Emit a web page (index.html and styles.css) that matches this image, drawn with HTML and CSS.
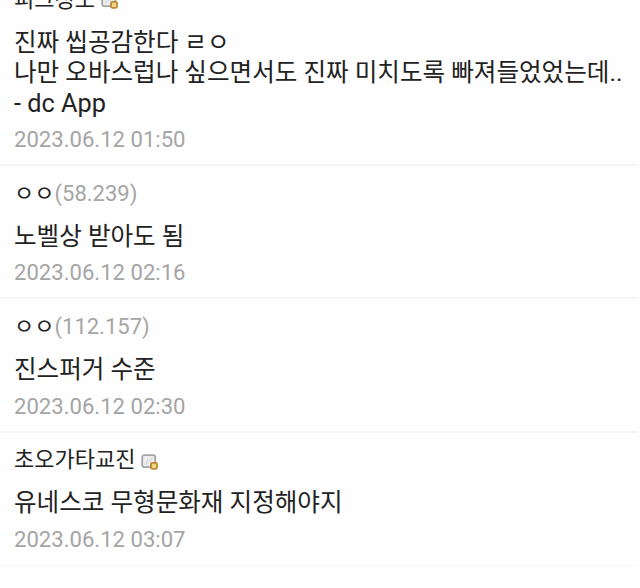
FILE: index.html
```html
<!DOCTYPE html>
<html lang="ko">
<head>
    <meta charset="UTF-8">
    <meta name="viewport" content="width=device-width, initial-scale=1.0">
    <title>댓글</title>
    <link rel="stylesheet" href="styles.css">
</head>
<body>
    <ul class="comments">
        <li class="comment first">
            <div class="writer">피그정모
                <svg class="badge" viewBox="0 0 17 16"><rect x="1.2" y="1.2" width="13" height="12" rx="2" fill="#eee" stroke="#a5a5a5" stroke-width="1.8"/><path d="M5 10l2-5M9 8l2-4" stroke="#d0d0d0" fill="none"/><rect x="10" y="8.8" width="6" height="6" rx="1.2" fill="#f3d488" stroke="#b98a35" stroke-width="1.8"/></svg>
            </div>
            <p class="text">진짜 씹공감한다 ㄹㅇ<br>나만 오바스럽나 싶으면서도 진짜 미치도록 빠져들었었는데..<br><span class="app">- dc App</span></p>
            <div class="date">2023.06.12 01:50</div>
        </li>
        <li class="comment">
            <div class="writer">ㅇㅇ<span class="ip">(58.239)</span></div>
            <p class="text">노벨상 받아도 됨</p>
            <div class="date">2023.06.12 02:16</div>
        </li>
        <li class="comment">
            <div class="writer">ㅇㅇ<span class="ip">(112.157)</span></div>
            <p class="text">진스퍼거 수준</p>
            <div class="date">2023.06.12 02:30</div>
        </li>
        <li class="comment last">
            <div class="writer">초오가타교진
                <svg class="badge" viewBox="0 0 17 16"><rect x="1.2" y="1.2" width="13" height="12" rx="2" fill="#eee" stroke="#a5a5a5" stroke-width="1.8"/><path d="M5 10l2-5M9 8l2-4" stroke="#d0d0d0" fill="none"/><rect x="10" y="8.8" width="6" height="6" rx="1.2" fill="#f3d488" stroke="#b98a35" stroke-width="1.8"/></svg>
            </div>
            <p class="text">유네스코 무형문화재 지정해야지</p>
            <div class="date">2023.06.12 03:07</div>
        </li>
    </ul>
</body>
</html>
```
FILE: styles.css
```css
* {
    box-sizing: border-box;
}
body {
    margin: 0;
    background: #fefefe;
    color: #222;
    font-family: Roboto, "Noto Sans CJK KR", sans-serif;
    overflow: hidden;
}
.comments {
    width: 638px;
    height: 588px;
    margin: 0;
    padding: 0 0 22px;
    list-style: none;
    display: flex;
    flex-direction: column;
    justify-content: flex-end;
    overflow: hidden;
}
.comment {
    flex: none;
    height: 133.3px;
    padding: 12.7px 14px 0;
    border-bottom: 2px solid #f6f6f6;
}
.comment.first {
    height: 194px;
}
.comment.last {
    border-bottom: 1px solid #fafafa;
}
.writer {
    display: flex;
    align-items: center;
    height: 30px;
    font-size: 22px;
    line-height: 30px;
    white-space: nowrap;
}
.ip {
    color: #a5a5a5;
}
.badge {
    width: 17px;
    height: 16px;
    margin: 3px 0 0 6px;
}
.text {
    margin: 12.8px 0 0;
    font-size: 24.57px;
    line-height: 30.5px;
    white-space: nowrap;
}
.app {
    font-size: 25.3px;
}
.date {
    margin-top: 7.2px;
    color: #a5a5a5;
    font-size: 22.1px;
    line-height: 26px;
}
```
